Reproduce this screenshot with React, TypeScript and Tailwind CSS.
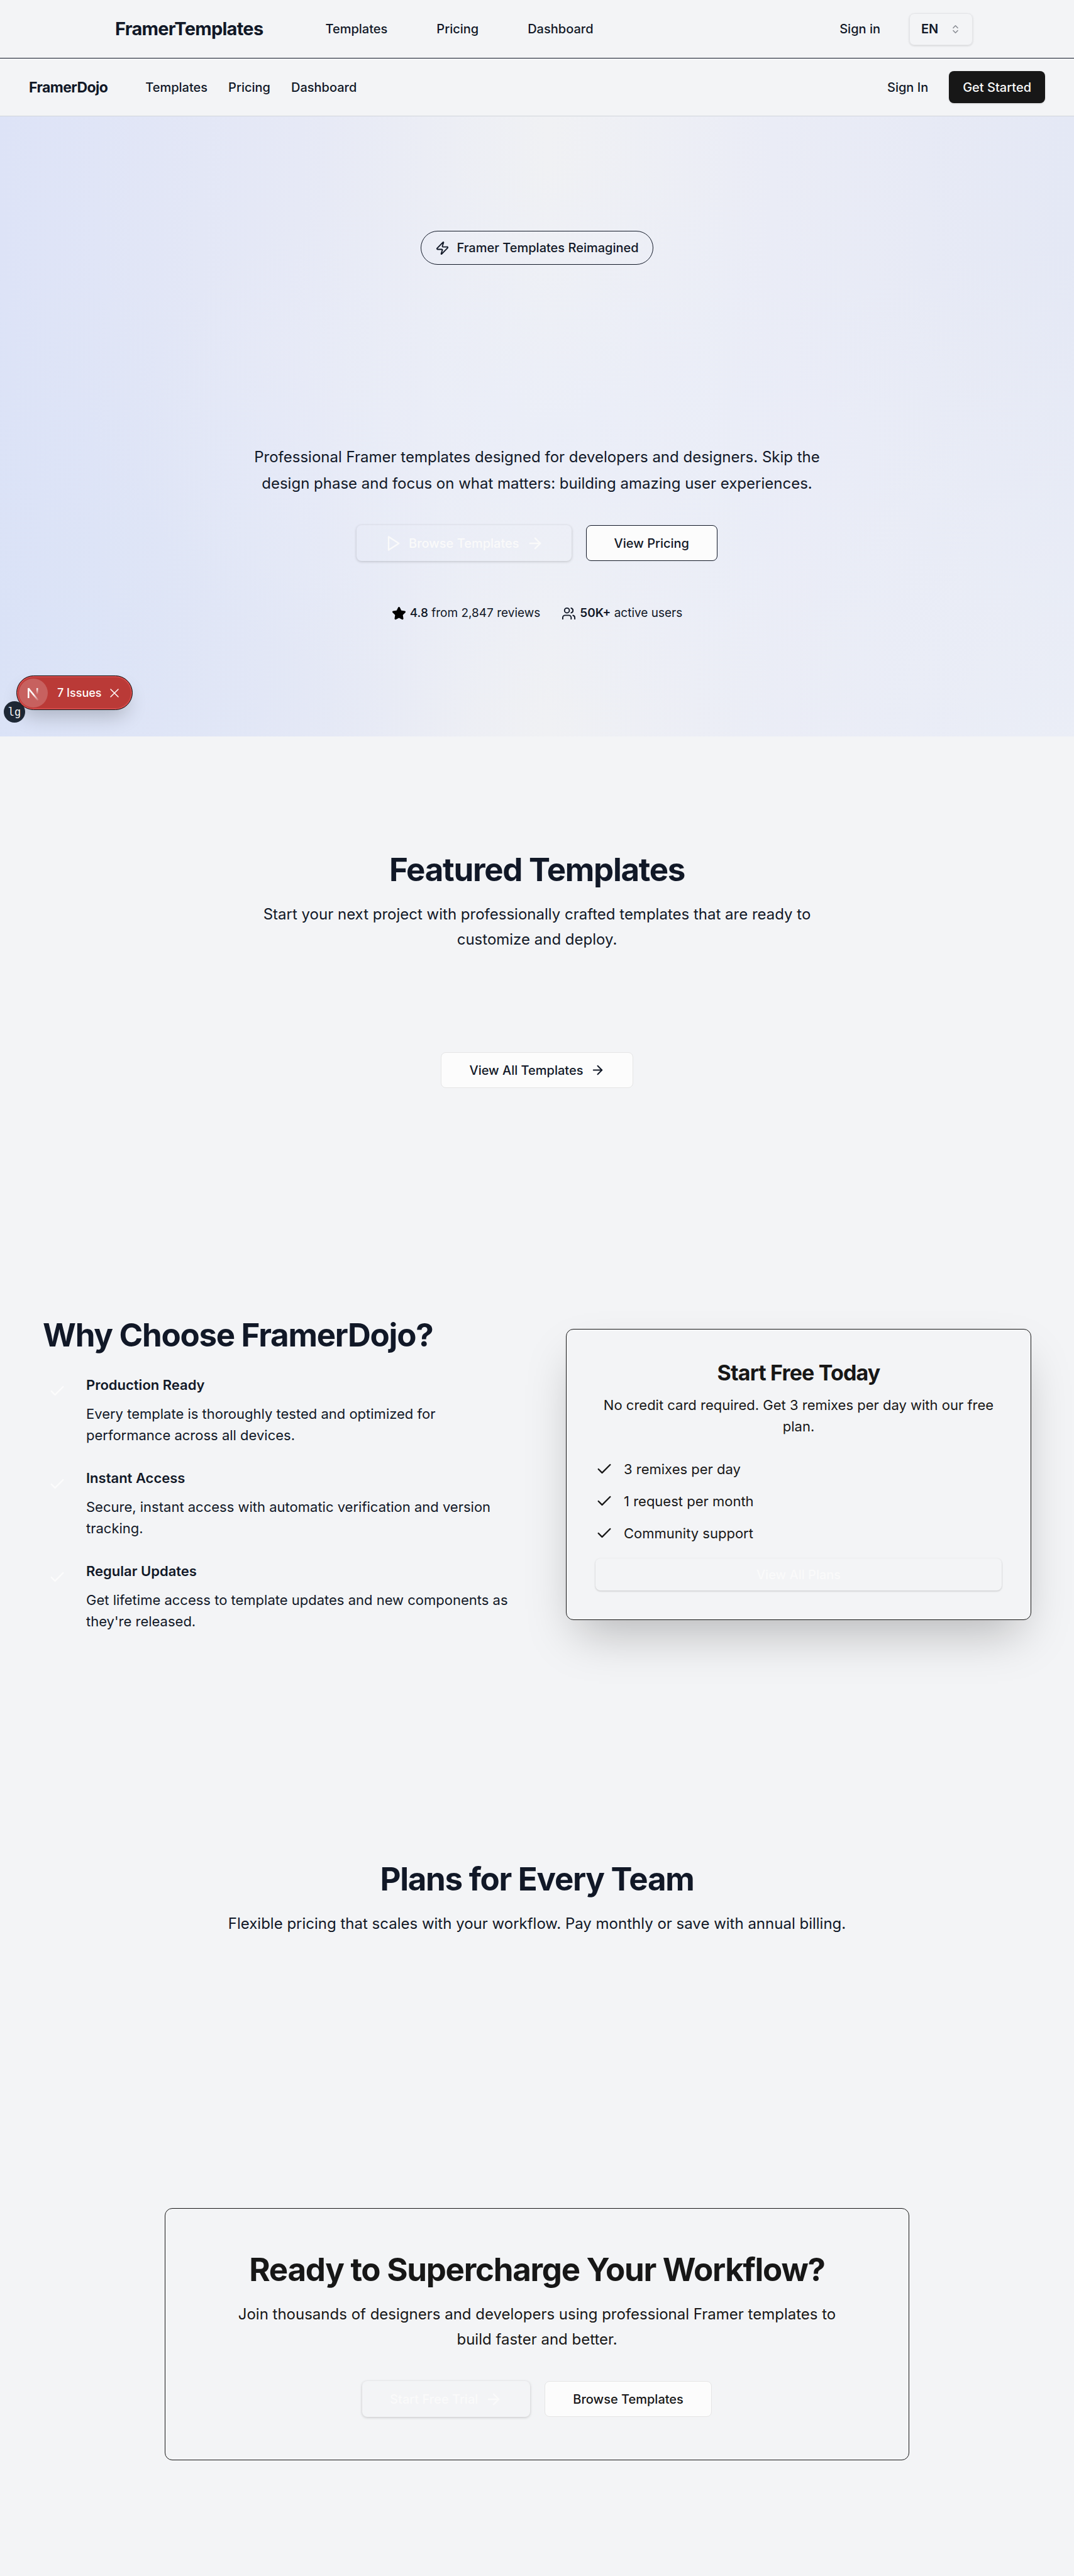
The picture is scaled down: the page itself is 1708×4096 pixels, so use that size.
import React from "react";
import { ArrowRight, Check, ChevronsUpDown, Star, Users, Zap } from "lucide-react";

const BUTTON = "inline-flex items-center justify-center rounded-lg font-medium text-[20px] leading-7";
const HEADING = "text-[51px] leading-[57px] font-bold tracking-tight";
const LEAD = "mt-[23px] max-w-[970px] text-center text-[24px] leading-10";

function PlayIcon() {
  return (
    <svg viewBox="0 0 24 24" className="size-7" fill="none" stroke="currentColor" strokeWidth="2" strokeLinecap="round" strokeLinejoin="round" aria-hidden="true">
      <polygon points="6 3 20 12 6 21 6 3" />
    </svg>
  );
}

function TopHeader() {
  return (
    <header className="flex h-[93px] items-center border-b border-[#111827] pr-[161px] pl-[183px]">
      <a href="#" className="text-[29px] leading-9 font-bold tracking-tight">FramerTemplates</a>
      <nav className="ml-[99px] flex gap-[78px] text-[20px] leading-7 font-medium">
        <a href="#templates">Templates</a>
        <a href="#pricing">Pricing</a>
        <a href="#dashboard">Dashboard</a>
      </nav>
      <div className="ml-auto flex items-center gap-[46px]">
        <a href="#signin" className="text-[20px] leading-7 font-medium">Sign in</a>
        <button type="button" className="flex h-[51px] w-[101px] items-center justify-between rounded-lg border border-[#e4e5e8] px-[18px] shadow-[0_1px_3px_rgba(0,0,0,0.14)]">
          <span className="text-[20px] leading-7 font-semibold">EN</span>
          <ChevronsUpDown className="size-[17px] text-[#8a8d94]" />
        </button>
      </div>
    </header>
  );
}

function SiteNav() {
  return (
    <header className="flex h-[92px] items-center border-b border-[#d1d5db] px-[46px]">
      <a href="#" className="text-[23px] leading-8 font-bold tracking-tight">FramerDojo</a>
      <nav className="ml-[60px] flex gap-[33px] text-[20px] leading-7 font-medium">
        <a href="#templates">Templates</a>
        <a href="#pricing">Pricing</a>
        <a href="#dashboard">Dashboard</a>
      </nav>
      <div className="ml-auto flex items-center gap-[33px]">
        <a href="#signin" className="text-[20px] leading-7 font-medium">Sign In</a>
        <a href="#start" className={`${BUTTON} h-[51px] bg-[#171717] px-[22px] text-[#fafafa] shadow-sm`}>Get Started</a>
      </div>
    </header>
  );
}

function NextLogo() {
  return (
    <svg viewBox="0 0 40 40" className="size-[46px]" fill="none" aria-hidden="true">
      <defs>
        <linearGradient id="diag" x1="20" y1="22" x2="27" y2="31" gradientUnits="userSpaceOnUse">
          <stop stopColor="#fff" />
          <stop offset="1" stopColor="#fff" stopOpacity="0" />
        </linearGradient>
        <linearGradient id="stem" x1="25" y1="13" x2="25" y2="22" gradientUnits="userSpaceOnUse">
          <stop stopColor="#fff" />
          <stop offset="1" stopColor="#fff" stopOpacity="0" />
        </linearGradient>
      </defs>
      <path d="M13.3 27V13.2" stroke="#fff" strokeWidth="2.2" />
      <path d="M13.2 13.6 26.6 30" stroke="url(#diag)" strokeWidth="2.2" />
      <path d="M25.4 13.2V22.5" stroke="url(#stem)" strokeWidth="2.2" />
    </svg>
  );
}

function DevBadges() {
  return (
    <>
      <div className="absolute bottom-[22px] left-[6px] flex size-[34px] items-center justify-center rounded-full bg-[#1f2937] font-['DejaVu_Sans_Mono',monospace] text-[17px] leading-6 text-white">lg</div>
      <div className="absolute bottom-[42px] left-[26px] flex h-[55px] w-[185px] items-center rounded-full border border-[#171717] bg-[#ba3a37] pl-[3px] font-medium text-white shadow-[inset_0_0_0_2px_#d34a4a,0_16px_32px_-8px_rgba(0,0,0,0.24)]">
        <span className="flex size-[46px] items-center justify-center rounded-full bg-white/20"><NextLogo /></span>
        <span className="ml-[15px] text-[18px] leading-6">7 Issues</span>
        <button type="button" aria-label="Dismiss issues" className="ml-[14px]">
          <svg viewBox="0 0 14 14" className="size-[14px]" stroke="currentColor" strokeWidth="1.5" strokeLinecap="round" aria-hidden="true">
            <path d="M1 1 13 13M13 1 1 13" />
          </svg>
        </button>
      </div>
    </>
  );
}

function Hero() {
  return (
    <section className="relative flex flex-col items-center bg-[radial-gradient(ellipse_40%_45%_at_52%_52%,rgba(233,237,249,0.75)_0%,rgba(233,237,249,0)_100%),radial-gradient(ellipse_45%_60%_at_0%_85%,rgba(213,225,246,0.4)_0%,rgba(213,225,246,0)_100%),radial-gradient(ellipse_50%_80%_at_100%_100%,rgba(236,239,247,0.8)_0%,rgba(236,239,247,0)_100%),linear-gradient(to_right,#dde3f7_0%,#e6e9f6_28%,#f0f1f4_51%,#eaecf6_72%,#e4e8f5_100%)] pt-[182px] pb-[182px]">
      <p className="flex h-[54px] items-center rounded-full border border-[#111827] px-[22px] text-[20px] leading-7 font-medium">
        <Zap className="mr-[11px] size-[23px]" />
        Framer Templates Reimagined
      </p>
      <p className="mt-[285px] max-w-[970px] text-center text-[24px] leading-[42px]">
        Professional Framer templates designed for developers and designers. Skip the design phase and focus on what matters: building amazing user experiences.
      </p>
      <div className="mt-[45px] flex gap-[23px]">
        <a href="#templates" className={`${BUTTON} h-[57px] gap-[11px] px-[44px] text-[#fafafa] shadow-[0_1px_4px_rgba(0,0,0,0.2)]`}>
          <PlayIcon />
          Browse Templates
          <ArrowRight className="size-7" />
        </a>
        <a href="#pricing" className={`${BUTTON} h-[57px] border border-[#111827] bg-[#fcfcfc] px-[44px]`}>View Pricing</a>
      </div>
      <div className="mt-[69px] flex gap-[34px] text-[19px] leading-7">
        <p className="flex items-center gap-[6px]">
          <Star className="size-[23px] fill-black text-black" />
          <span><span className="font-medium">4.8</span> from 2,847 reviews</span>
        </p>
        <p className="flex items-center gap-[6px]">
          <Users className="size-[23px]" />
          <span><span className="font-semibold">50K+</span> active users</span>
        </p>
      </div>
      <DevBadges />
    </section>
  );
}

function Featured() {
  return (
    <section className="flex flex-col items-center pt-[183px] pb-[182px]">
      <h2 className={HEADING}>Featured Templates</h2>
      <p className={LEAD}>
        Start your next project with professionally crafted templates that are ready to customize and deploy.
      </p>
      <a href="#templates" className={`${BUTTON} mt-[159px] h-[57px] gap-[11px] border border-[#e5e5e5] bg-[#fcfcfc] px-[44px]`}>
        View All Templates
        <ArrowRight className="size-[23px]" />
      </a>
    </section>
  );
}

const REASONS = [
  { title: "Production Ready", text: "Every template is thoroughly tested and optimized for performance across all devices." },
  { title: "Instant Access", text: "Secure, instant access with automatic verification and version tracking." },
  { title: "Regular Updates", text: "Get lifetime access to template updates and new components as they're released." },
];

const FREE_PERKS = ["3 remixes per day", "1 request per month", "Community support"];

function WhyChoose() {
  return (
    <section className="grid grid-cols-2 items-center gap-[92px] px-[68px] pt-[182px] pb-[182px]">
      <div>
        <h2 className={HEADING}>Why Choose FramerDojo?</h2>
        <ul className="mt-[34px] flex flex-col gap-[34px]">
          {REASONS.map((reason) => (
            <li key={reason.title} className="flex gap-[23px]">
              <span className="mt-1 flex size-[46px] shrink-0 items-center justify-center text-[#fcfcfc]">
                <Check className="size-7" />
              </span>
              <div>
                <h3 className="text-[22px] leading-[34px] font-semibold">{reason.title}</h3>
                <p className="mt-3 text-[22px] leading-[34px]">{reason.text}</p>
              </div>
            </li>
          ))}
        </ul>
      </div>
      <div className="rounded-xl border border-[#171717] p-[46px] text-[#171717] shadow-[0_36px_72px_-17px_rgba(0,0,0,0.25)]">
        <h3 className="text-center text-[34px] leading-[46px] font-bold tracking-tight">Start Free Today</h3>
        <p className="mt-[11px] text-center text-[22px] leading-[34px]">
          No credit card required. Get 3 remixes per day with our free plan.
        </p>
        <ul className="mt-[34px] flex flex-col gap-[17px] text-[22px] leading-[34px]">
          {FREE_PERKS.map((perk) => (
            <li key={perk} className="flex items-center gap-[17px]">
              <Check className="size-7" />
              {perk}
            </li>
          ))}
        </ul>
        <a href="#plans" className={`${BUTTON} mt-[23px] h-[51px] w-full text-[#fafafa] shadow-[0_1px_3px_rgba(0,0,0,0.2)]`}>View All Plans</a>
      </div>
    </section>
  );
}

function Plans() {
  return (
    <section id="plans" className="flex flex-col items-center pt-[182px] pb-[250px]">
      <h2 className={HEADING}>Plans for Every Team</h2>
      <p className="mt-[23px] text-center text-[24px] leading-10">
        Flexible pricing that scales with your workflow. Pay monthly or save with annual billing.
      </p>
    </section>
  );
}

function CallToAction() {
  return (
    <section className="flex px-[68px] pt-[182px] pb-[184px]">
      <div className="mx-auto flex w-full max-w-[1184px] flex-col items-center rounded-xl border border-[#171717] px-[68px] py-[68px] text-[#171717]">
        <h2 className={HEADING}>Ready to Supercharge Your Workflow?</h2>
        <p className={LEAD}>
          Join thousands of designers and developers using professional Framer templates to build faster and better.
        </p>
        <div className="mt-[46px] flex gap-[23px]">
          <a href="#trial" className={`${BUTTON} h-[57px] gap-[11px] px-[44px] text-[#fafafa] shadow-[0_1px_4px_rgba(0,0,0,0.2)]`}>
            Start Free Trial
            <ArrowRight className="size-7" />
          </a>
          <a href="#templates" className={`${BUTTON} h-[57px] border border-[#e5e5e5] bg-[#fcfcfc] px-[44px]`}>Browse Templates</a>
        </div>
      </div>
    </section>
  );
}

export default function App() {
  return (
    <div className="bg-[#f3f4f6] font-[Inter,sans-serif] text-[#111827]">
      <TopHeader />
      <SiteNav />
      <main>
        <Hero />
        <Featured />
        <WhyChoose />
        <Plans />
        <CallToAction />
      </main>
    </div>
  );
}
